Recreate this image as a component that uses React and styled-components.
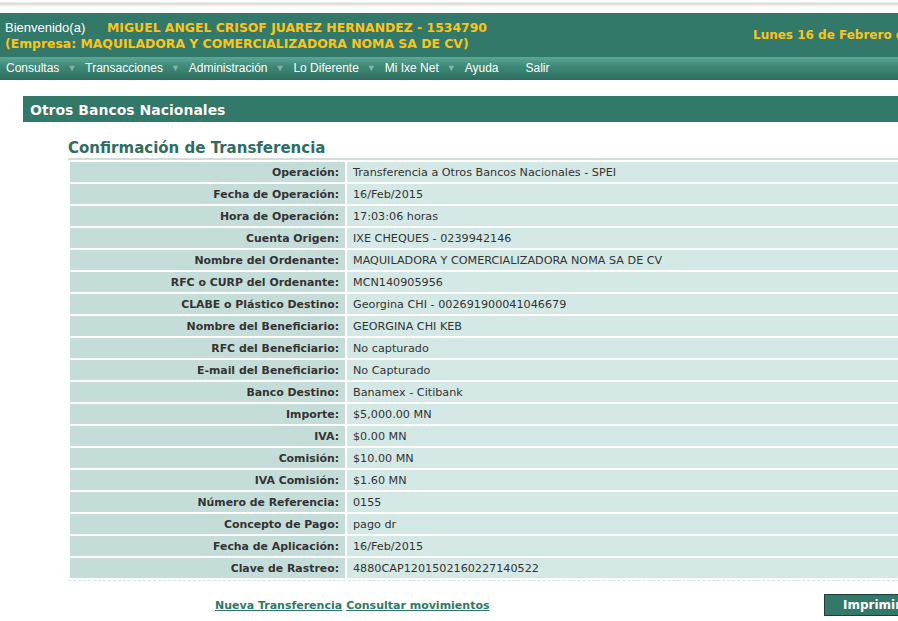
import React from 'react';
import styled, { createGlobalStyle } from 'styled-components';

const GlobalStyle = createGlobalStyle`
    html, body {
        margin: 0;
        padding: 0;
        background: #fff;
        overflow: hidden;
    }
    body {
        font-family: "DejaVu Sans", Verdana, sans-serif;
    }
`;

const rows = [
    ['Operación', 'Transferencia a Otros Bancos Nacionales - SPEI'],
    ['Fecha de Operación', '16/Feb/2015'],
    ['Hora de Operación', '17:03:06 horas'],
    ['Cuenta Origen', 'IXE CHEQUES - 0239942146'],
    ['Nombre del Ordenante', 'MAQUILADORA Y COMERCIALIZADORA NOMA SA DE CV'],
    ['RFC o CURP del Ordenante', 'MCN140905956'],
    ['CLABE o Plástico Destino', 'Georgina CHI - 002691900041046679'],
    ['Nombre del Beneficiario', 'GEORGINA CHI KEB'],
    ['RFC del Beneficiario', 'No capturado'],
    ['E-mail del Beneficiario', 'No Capturado'],
    ['Banco Destino', 'Banamex - Citibank'],
    ['Importe', '$5,000.00 MN'],
    ['IVA', '$0.00 MN'],
    ['Comisión', '$10.00 MN'],
    ['IVA Comisión', '$1.60 MN'],
    ['Número de Referencia', '0155'],
    ['Concepto de Pago', 'pago dr'],
    ['Fecha de Aplicación', '16/Feb/2015'],
    ['Clave de Rastreo', '4880CAP1201502160227140522'],
];

const menu = ['Consultas', 'Transacciones', 'Administración', 'Lo Diferente', 'Mi Ixe Net'];

const App = () => {
    return (
        <Page>
            <GlobalStyle />
            <TopShade />
            <Header>
                <Welcome>
                    <Line>
                        <Hello>Bienvenido(a)</Hello>
                        <Yellow>MIGUEL ANGEL CRISOF JUAREZ HERNANDEZ - 1534790</Yellow>
                    </Line>
                    <Line>
                        <Yellow>(Empresa: MAQUILADORA Y COMERCIALIZADORA NOMA SA DE CV)</Yellow>
                    </Line>
                </Welcome>
                <DateText>Lunes 16 de Febrero de 2015</DateText>
            </Header>
            <Nav>
                {menu.map((item) => (
                    <NavItem key={item}>
                        {item}
                        <Arrow>▼</Arrow>
                    </NavItem>
                ))}
                <NavItem $gap="27px">Ayuda</NavItem>
                <NavItem $gap="0">Salir</NavItem>
            </Nav>
            <Content>
                <SectionBar>Otros Bancos Nacionales</SectionBar>
                <Inner>
                    <Title>Confirmación de Transferencia</Title>
                    <Table>
                        <tbody>
                            {rows.map(([label, value]) => (
                                <tr key={label}>
                                    <Label>{label}:</Label>
                                    <Value>{value}</Value>
                                </tr>
                            ))}
                        </tbody>
                    </Table>
                    <Footer>
                        <Links>
                            <LinkText href="#">Nueva Transferencia</LinkText>
                            <LinkText href="#">Consultar movimientos</LinkText>
                        </Links>
                        <PrintButton>Imprimir</PrintButton>
                    </Footer>
                </Inner>
            </Content>
        </Page>
    );
};

const Page = styled.div`
    width: 1020px;
`;

const TopShade = styled.div`
    height: 13px;
    background: linear-gradient(to bottom, #fff 0px, #fff 2px, #d8d8d8 3px, #e8e8e8 5px, #fff 7px, #fff 100%);
`;

const Header = styled.div`
    height: 44px;
    background: #33796a;
    display: flex;
    align-items: center;
    padding: 0 0 0 5px;
`;

const Welcome = styled.div`
    display: flex;
    flex-direction: column;
    width: 748px;
    padding-top: 1px;
`;

const Line = styled.div`
    display: flex;
    align-items: baseline;
    height: 16px;
    line-height: 16px;
`;

const Hello = styled.span`
    font-family: "Liberation Sans", Arial, sans-serif;
    font-size: 13px;
    color: #fff;
    width: 102px;
`;

const Yellow = styled.span`
    font-family: "DejaVu Sans", Verdana, sans-serif;
    font-weight: bold;
    font-size: 12.4px;
    color: #fcc419;
    white-space: nowrap;
`;

const DateText = styled(Yellow)`
    margin-top: -1px;
    font-size: 12px;
`;

const Nav = styled.div`
    height: 23px;
    display: flex;
    align-items: center;
    padding-left: 6px;
    background: linear-gradient(to bottom, #5ba895 0%, #3f8a77 40%, #2d6e5e 100%);
    font-family: "Liberation Sans", Arial, sans-serif;
    font-size: 12px;
    color: #fff;
    padding-bottom: 1px;
    box-sizing: border-box;
`;

const NavItem = styled.span`
    display: flex;
    align-items: center;
    margin-right: ${(p) => p.$gap || '9px'};
    white-space: nowrap;
`;

const Arrow = styled.span`
    font-size: 9px;
    color: #86b5a7;
    margin-left: 8px;
`;

const Content = styled.div`
    padding: 16px 0 0 23px;
`;

const SectionBar = styled.div`
    height: 26px;
    line-height: 28px;
    background: #33796a;
    color: #fff;
    font-weight: bold;
    font-size: 14px;
    padding-left: 7px;
    text-shadow: 0 0 1px rgba(0, 0, 0, 0.4);
`;

const Inner = styled.div`
    padding-left: 45px;
`;

const Title = styled.h3`
    margin: 16px 0 0 0;
    font-size: 15px;
    font-weight: bold;
    color: #2e6d5f;
    line-height: 20px;
    border-bottom: 2px solid #d3dcda;
`;

const Table = styled.table`
    width: 100%;
    border-spacing: 2px;
    border-bottom: 1px dashed #cfe6e1;
    font-size: 11.2px;
    color: #333;
`;

const Label = styled.td`
    width: 269px;
    height: 20px;
    padding: 0 6px 0 0;
    background: #c5ddd8;
    text-align: right;
    font-weight: bold;
    font-size: 10.9px;
    white-space: nowrap;
`;

const Value = styled.td`
    height: 20px;
    padding: 0 0 0 6px;
    background: #d4e9e5;
    white-space: nowrap;
`;

const Footer = styled.div`
    display: flex;
    align-items: center;
    padding-top: 13px;
`;

const Links = styled.div`
    display: flex;
    gap: 4px;
    padding-left: 147px;
    width: 609px;
`;

const LinkText = styled.a`
    color: #2e7a66;
    font-weight: bold;
    font-size: 11px;
    text-decoration: underline;
`;

const PrintButton = styled.button`
    height: 22px;
    width: 100px;
    background: #33796a;
    border: 1px solid #1d3f37;
    color: #fff;
    font-family: "DejaVu Sans", Verdana, sans-serif;
    font-weight: bold;
    font-size: 12px;
    text-align: left;
    padding-left: 18px;
`;

export default App;
